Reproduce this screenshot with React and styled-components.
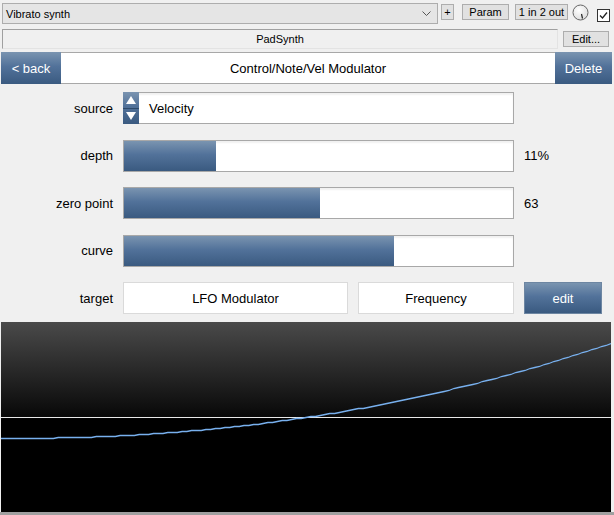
import React from 'react'
import styled, { createGlobalStyle } from 'styled-components'

const GlobalStyle = createGlobalStyle`
  html, body {
    margin: 0;
    padding: 0;
    background: #f0f0f0;
    font-family: "Liberation Sans", Arial, sans-serif;
  }
  * { box-sizing: border-box; }
`

const blueGrad = 'linear-gradient(to bottom, #7a94b0 0%, #52729a 45%, #3a5a80 100%)'

const makeCurve = () => {
  const pts = []
  const steps = 128
  for (let i = 0; i <= steps; i++) {
    const t = i / steps
    const x = t * 610
    const y = Math.round(116 - 95 * Math.pow(t, 2.18)) + 0.5
    pts.push(`${x.toFixed(1)},${y}`)
  }
  return pts.join(' ')
}

const App = () => {
  const curve = makeCurve()
  return (
    <Page>
      <GlobalStyle />
      <TopBar>
        <Combo>
          <span>Vibrato synth</span>
          <svg width="9" height="6" viewBox="0 0 9 6">
            <polyline points="0.5,0.5 4.5,4.5 8.5,0.5" fill="none" stroke="#555" strokeWidth="1" />
          </svg>
        </Combo>
        <SmallButton $w={13} $ml={3}>+</SmallButton>
        <SmallButton $w={47} $ml={8}>Param</SmallButton>
        <SmallButton $w={53} $ml={6}>1 in 2 out</SmallButton>
        <Knob width="17" height="17" viewBox="0 0 17 17">
          <defs>
            <radialGradient id="kg" cx="0.4" cy="0.35" r="0.7">
              <stop offset="0" stopColor="#ffffff" />
              <stop offset="1" stopColor="#dcdcdc" />
            </radialGradient>
          </defs>
          <circle cx="8.5" cy="8.5" r="7.5" fill="url(#kg)" stroke="#666" strokeWidth="1" />
          <line x1="9.5" y1="10" x2="10.5" y2="14.5" stroke="#222" strokeWidth="1.2" />
        </Knob>
        <Check>
          <svg width="11" height="11" viewBox="0 0 11 11">
            <polyline points="2,5.5 4.5,8 9,2.5" fill="none" stroke="#222" strokeWidth="1.3" />
          </svg>
        </Check>
      </TopBar>

      <SecondBar>
        <PluginField>PadSynth</PluginField>
        <SmallButton $w={46} $ml={5} $mt={2}>Edit...</SmallButton>
      </SecondBar>

      <Header>
        <NavButton $w={60}>&lt; back</NavButton>
        <Title>Control/Note/Vel Modulator</Title>
        <NavButton $w={57}>Delete</NavButton>
      </Header>

      <Form>
        <Label>source</Label>
        <SelectBox>
          <Spinner>
            <SpinHalf>
              <svg width="10" height="8" viewBox="0 0 10 8"><polygon points="5,0 10,8 0,8" fill="#fff" /></svg>
            </SpinHalf>
            <SpinHalf $bottom>
              <svg width="10" height="8" viewBox="0 0 10 8"><polygon points="0,0 10,0 5,8" fill="#fff" /></svg>
            </SpinHalf>
          </Spinner>
          <SelectText>Velocity</SelectText>
        </SelectBox>
        <Value />

        <Label>depth</Label>
        <Bar>
          <BarFill style={{ width: '92px' }} />
        </Bar>
        <Value>11%</Value>

        <Label>zero point</Label>
        <Bar>
          <BarFill style={{ width: '196px' }} />
        </Bar>
        <Value>63</Value>

        <Label>curve</Label>
        <Bar>
          <BarFill style={{ width: '270px' }} />
        </Bar>
        <Value />

        <Label>target</Label>
        <TargetCell>
          <TargetBox $w={225}>LFO Modulator</TargetBox>
          <TargetBox $w={156}>Frequency</TargetBox>
        </TargetCell>
        <EditButton>edit</EditButton>
      </Form>

      <GraphWrap>
        <svg width="610" height="190" viewBox="0 0 610 190" style={{ display: 'block' }}>
          <defs>
            <linearGradient id="bg" x1="0" y1="0" x2="0" y2="1">
              <stop offset="0" stopColor="#4a4a4a" />
              <stop offset="0.5" stopColor="#080808" />
              <stop offset="0.51" stopColor="#000" />
              <stop offset="1" stopColor="#000" />
            </linearGradient>
          </defs>
          <rect x="0" y="0" width="610" height="190" fill="url(#bg)" />
          <line x1="0" y1="95.5" x2="610" y2="95.5" stroke="#e8e8e8" strokeWidth="1" />
          <polyline points={curve} fill="none" stroke="#78b0ee" strokeWidth="1.3" />
        </svg>
      </GraphWrap>
      <BottomStrip />
    </Page>
  )
}

export default App

const Page = styled.div`
  width: 614px;
  height: 515px;
  overflow: hidden;
  display: flex;
  flex-direction: column;
  background: #f0f0f0;
`

const TopBar = styled.div`
  display: flex;
  align-items: flex-start;
  height: 24px;
  padding: 3px 0 0 2px;
  font-size: 11px;
  color: #000;
`

const Combo = styled.div`
  width: 436px;
  height: 21px;
  border: 1px solid #adadad;
  background: #e5e5e5;
  display: flex;
  align-items: center;
  justify-content: space-between;
  padding: 0 6px 0 3px;
  font-size: 11px;
`

const SmallButton = styled.div`
  width: ${p => p.$w}px;
  height: 16px;
  margin-left: ${p => p.$ml}px;
  margin-top: ${p => (p.$mt !== undefined ? p.$mt : 1)}px;
  border: 1px solid #adadad;
  background: #e1e1e1;
  display: flex;
  align-items: center;
  justify-content: center;
  font-size: 11px;
  white-space: nowrap;
`

const Knob = styled.svg`
  margin-left: 4px;
  margin-top: 1px;
`

const Check = styled.div`
  width: 13px;
  height: 13px;
  margin-left: 8px;
  margin-top: 6px;
  border: 1px solid #333;
  background: #fff;
  display: flex;
  align-items: center;
  justify-content: center;
`

const SecondBar = styled.div`
  display: flex;
  align-items: flex-start;
  margin-top: 5px;
  padding-left: 2px;
  height: 23px;
  font-size: 11px;
`

const PluginField = styled.div`
  width: 556px;
  height: 20px;
  border: 1px solid #a0a0a0;
  border-right-color: #e3e3e3;
  border-bottom-color: #e3e3e3;
  background: #f0f0f0;
  display: flex;
  align-items: center;
  justify-content: center;
`

const Header = styled.div`
  display: flex;
  height: 32px;
  margin: 0 2px 0 1px;
`

const NavButton = styled.div`
  width: ${p => p.$w}px;
  background: ${blueGrad};
  color: #fff;
  font-size: 13px;
  display: flex;
  align-items: center;
  justify-content: center;
`

const Title = styled.div`
  flex: 1;
  background: #fff;
  border-top: 1px solid #a8a8a8;
  border-bottom: 1px solid #a8a8a8;
  display: flex;
  align-items: center;
  justify-content: center;
  font-size: 13px;
  color: #000;
`

const Form = styled.div`
  display: grid;
  grid-template-columns: 113px 391px 1fr;
  grid-auto-rows: 32px;
  column-gap: 10px;
  row-gap: 15.5px;
  padding-top: 8px;
  font-size: 13px;
  color: #000;
`

const Label = styled.div`
  display: flex;
  align-items: center;
  justify-content: flex-end;
`

const Value = styled.div`
  display: flex;
  align-items: center;
`

const SelectBox = styled.div`
  display: flex;
  border: 1px solid #a8a8a8;
  background: #fff;
  box-shadow: inset 0 2px 2px rgba(0, 0, 0, 0.06);
`

const Spinner = styled.div`
  width: 16px;
  display: flex;
  flex-direction: column;
  background: ${blueGrad};
  margin: -1px 0 -1px -1px;
`

const SpinHalf = styled.div`
  flex: 1;
  display: flex;
  align-items: center;
  justify-content: center;
  border-top: ${p => (p.$bottom ? '1px solid #2e4a6a' : 'none')};
`

const SelectText = styled.div`
  display: flex;
  align-items: center;
  padding-left: 10px;
  font-size: 13px;
`

const Bar = styled.div`
  border: 1px solid #a8a8a8;
  background: #fff;
  box-shadow: inset 0 2px 2px rgba(0, 0, 0, 0.06);
  display: flex;
`

const BarFill = styled.div`
  height: 100%;
  background: ${blueGrad};
`

const TargetCell = styled.div`
  display: flex;
  justify-content: space-between;
`

const TargetBox = styled.div`
  width: ${p => p.$w}px;
  border: 1px solid #dadada;
  background: #fff;
  display: flex;
  align-items: center;
  justify-content: center;
  font-size: 13px;
`

const EditButton = styled.div`
  width: 78px;
  background: ${blueGrad};
  border: 1px solid #6d86a2;
  color: #fff;
  font-size: 13px;
  display: flex;
  align-items: center;
  justify-content: center;
`

const GraphWrap = styled.div`
  margin-top: 8px;
  padding-left: 1px;
  height: 190px;
`

const BottomStrip = styled.div`
  height: 3px;
  background: #a0a0a0;
`
